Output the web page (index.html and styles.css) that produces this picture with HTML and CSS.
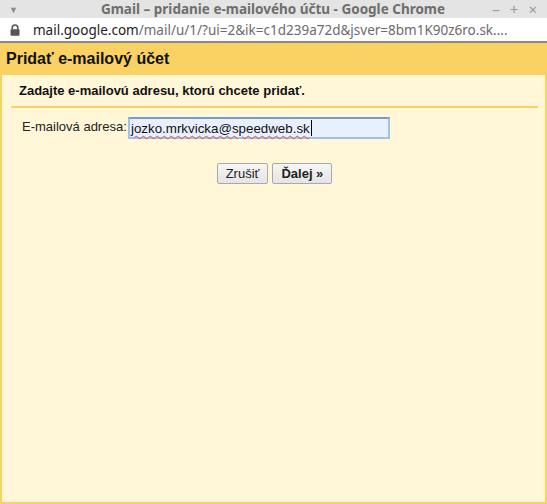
FILE: index.html
```html
<!DOCTYPE html>
<html>
<head>
<meta charset="utf-8">
<title>Gmail – pridanie e-mailového účtu</title>
<link rel="stylesheet" href="styles.css">
</head>
<body>
<div class="window">
	<div class="titlebar">
		<span class="menuArrow">&#9660;</span>
		<span class="winTitle">Gmail – pridanie e-mailového účtu - Google Chrome</span>
		<span class="winBtns"><span>&#8211;</span><span>+</span><span>&#215;</span></span>
	</div>
	<div class="addressbar">
		<svg class="lock" width="10" height="12" viewBox="0 0 10 12">
			<path d="M2.2 5.5V3.8a2.8 2.8 0 0 1 5.6 0v1.7" fill="none" stroke="#555" stroke-width="1.6"/>
			<rect x="0.5" y="5.3" width="9" height="6.4" rx="0.8" fill="#555"/>
		</svg>
		<span class="url"><span class="host">mail.google.com</span>/mail/u/1/?ui=2&amp;ik=c1d239a72d&amp;jsver=8bm1K90z6ro.sk....</span>
	</div>
	<div class="dialog">
		<div class="dlgHeader">Pridať e-mailový účet</div>
		<div class="dlgBody">
			<div class="intro">Zadajte e-mailovú adresu, ktorú chcete pridať.</div>
			<div class="formRow">
				<label class="lbl" for="txtEmail">E-mailová adresa:</label>
				<div class="inputBox" id="txtEmail"><span class="val">jozko.mrkvicka@speedweb.sk</span><span class="caret"></span></div>
			</div>
			<div class="btnRow">
				<button class="btn">Zrušiť</button>
				<button class="btn btnBold">Ďalej »</button>
			</div>
		</div>
	</div>
</div>
</body>
</html>
```

FILE: styles.css
```css
html, body {
	margin: 0;
	padding: 0;
	height: 100%;
}

body {
	font-family: "Liberation Sans", Arial, sans-serif;
	background-color: #fff7d7;
}

.window {
	display: flex;
	flex-direction: column;
	height: 504px;
}

.titlebar {
	height: 18px;
	background-color: #e4e4e4;
	display: flex;
	align-items: center;
	justify-content: space-between;
	padding: 0 10px 0 9px;
	font-family: "Noto Sans", "Open Sans", sans-serif;
	color: #7a7a7a;
}

.menuArrow {
	font-size: 9px;
	color: #8a8a8a;
	width: 60px;
}

.winTitle {
	font-size: 13.5px;
	font-weight: bold;
	color: #6e6e6e;
	line-height: 18px;
}

.winBtns {
	display: flex;
	gap: 10px;
	width: 60px;
	justify-content: flex-end;
	font-size: 15px;
	line-height: 18px;
	color: #9a9a9a;
}

.addressbar {
	height: 23px;
	background-color: #ffffff;
	display: flex;
	align-items: center;
	padding-left: 10px;
	border-bottom: 2px solid #888888;
	font-family: "Noto Sans", "Open Sans", sans-serif;
	overflow: hidden;
}

.lock {
	flex-shrink: 0;
	margin-right: 13px;
}

.url {
	font-size: 13.5px;
	color: #6b6b6b;
	white-space: nowrap;
}

.url .host {
	color: #222222;
}

.dialog {
	flex: 1;
	display: flex;
	flex-direction: column;
	border: solid 2px #fad163;
	border-top: none;
	background-color: #fff7d7;
}

.dlgHeader {
	height: 32px;
	margin: 0 -2px;
	padding-left: 6px;
	background-color: #fad163;
	font-size: 16px;
	font-weight: bold;
	color: #111111;
	display: flex;
	align-items: center;
}

.dlgBody {
	padding: 0 7px 0 9px;
}

.intro {
	font-size: 13px;
	font-weight: bold;
	line-height: 16px;
	color: #111111;
	padding: 8px 8px 7px 8px;
	border-bottom: 2px solid #fad163;
}

.formRow {
	display: flex;
	align-items: center;
	margin-top: 9px;
	padding-left: 11px;
}

.lbl {
	font-size: 13px;
	color: #222222;
	width: 106px;
	margin-top: -3px;
}

.inputBox {
	box-sizing: border-box;
	width: 262px;
	height: 22px;
	border: solid 2px #9ec2e8;
	border-top-color: #7b9ac4;
	background-color: #e8f0fe;
	display: flex;
	align-items: center;
	padding-left: 1px;
	font-size: 13.33px;
	color: #111111;
}

.inputBox .val {
	text-decoration: underline wavy #e05050;
	text-decoration-thickness: 1px;
	text-underline-offset: 2px;
}

.inputBox .caret {
	width: 1px;
	height: 16px;
	background-color: #000000;
	margin-left: 1px;
}

.btnRow {
	display: flex;
	justify-content: center;
	gap: 4px;
	margin-top: 24px;
}

.btn {
	height: 21px;
	padding: 0 8px;
	font-family: "Liberation Sans", Arial, sans-serif;
	font-size: 13px;
	color: #222222;
	border: solid 1px #a9a9a9;
	border-radius: 2px;
	background: linear-gradient(#f6f6f6, #e4e4e4);
}

.btnBold {
	font-weight: bold;
}
```
